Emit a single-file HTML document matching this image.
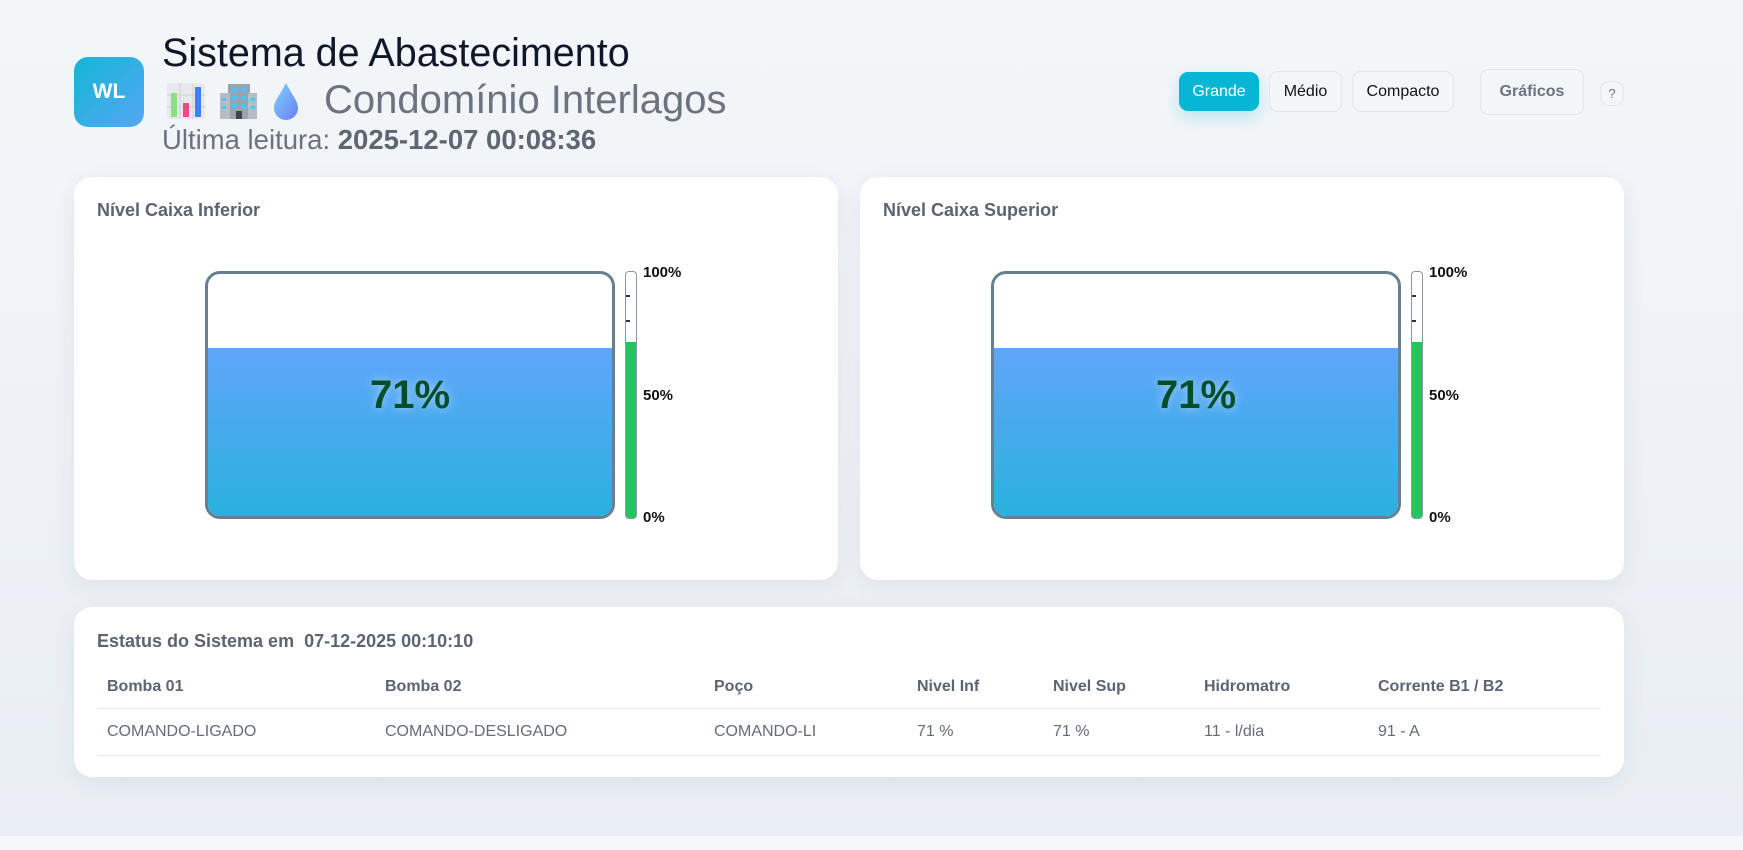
<!DOCTYPE html>
<html><head><meta charset="utf-8"><style>
*{box-sizing:border-box;margin:0;padding:0}
body{width:1743px;height:850px;overflow:hidden;font-family:"Liberation Sans",sans-serif;background:linear-gradient(180deg,#f3f6f9 0%,#e9eef4 100%);position:relative}
.foot{position:absolute;left:0;top:836px;width:1743px;height:14px;background:#f4f7fa}
.abs{position:absolute}
.logo{left:74px;top:57px;width:70px;height:70px;border-radius:14px;background:linear-gradient(135deg,#14b6d6,#55a6f5);color:#fff;font-weight:bold;font-size:21px;display:flex;align-items:center;justify-content:center}
.t1{left:162px;top:31px;font-size:39.5px;color:#0f172a;white-space:nowrap}
.t2{left:166px;top:78px;font-size:40px;color:#6b7280;white-space:nowrap;display:flex;align-items:center;gap:12px}
.t3{left:162px;top:124px;font-size:27.5px;color:#6b7280;white-space:nowrap}
.t3 b{color:#5f6673}
.btn{position:absolute;border:1px solid #e0e5eb;border-radius:9px;background:#f3f6f9;display:flex;align-items:center;justify-content:center;font-size:16px;color:#111}
.card{position:absolute;background:#fff;border-radius:18px;box-shadow:0 6px 24px rgba(30,50,80,.07)}
.ct{position:absolute;left:23px;top:23px;font-size:18px;font-weight:bold;color:#5b6472}
.tank{position:absolute;width:410px;height:248px;border:3.5px solid #66808f;border-radius:15px;overflow:hidden;background:#fff}
.water{position:absolute;left:0;right:0;bottom:0;height:168px;background:linear-gradient(180deg,#60a5fa,#29b1de)}
.pct{position:absolute;left:0;right:0;top:99px;text-align:center;font-size:40px;font-weight:bold;color:#064e2a;text-shadow:0 0 10px rgba(255,255,255,.5)}
.gauge{position:absolute;width:12px;height:248px;border:1.5px solid #8b97a8;border-radius:4px;background:#fff;overflow:hidden}
.gauge .g{position:absolute;left:0;right:0;bottom:0;height:176px;background:#22c55e}
.gauge .k{position:absolute;left:0;width:4px;height:1.5px;background:#333}
.lbl{position:absolute;font-size:15px;font-weight:bold;color:#111}
table{position:absolute;left:97px;top:666px;width:1504px;border-collapse:collapse;font-size:16px}
th{text-align:left;color:#5b6472;font-weight:bold;height:42px;border-bottom:1px solid #e8ecf0;padding-left:10px}
td{color:#646c78;height:47px;border-bottom:1px solid #e8ecf0;padding-left:10px}
</style></head><body>
<div class="foot"></div>
<div class="abs logo">WL</div>
<div class="abs t1">Sistema de Abastecimento</div>
<div class="abs t2">
<svg width="40" height="40" viewBox="0 0 40 40"><rect x="1" y="2" width="38" height="36" rx="3" fill="#e8e8ee"/><path d="M1 14h38M1 26h38M14 2v36M27 2v36" stroke="#cfcfd8"/><rect x="5" y="12" width="6" height="24" fill="#8de07a"/><rect x="17" y="22" width="6" height="14" fill="#ef4a82"/><rect x="29" y="6" width="6" height="30" fill="#3b82f6"/></svg>
<svg width="40" height="40" viewBox="0 0 40 40"><rect x="10" y="3" width="22" height="35" fill="#9aa3b0"/><rect x="2" y="12" width="10" height="26" fill="#b4bcc6"/><rect x="30" y="12" width="9" height="26" fill="#b4bcc6"/><g fill="#4fc3f7"><rect x="14" y="7" width="5" height="4"/><rect x="23" y="7" width="5" height="4"/><rect x="14" y="15" width="5" height="4"/><rect x="23" y="15" width="5" height="4"/><rect x="14" y="23" width="5" height="4"/><rect x="23" y="23" width="5" height="4"/><rect x="4" y="17" width="4" height="3"/><rect x="4" y="25" width="4" height="3"/><rect x="33" y="17" width="4" height="3"/><rect x="33" y="25" width="4" height="3"/></g><rect x="18" y="30" width="6" height="8" fill="#444"/></svg>
<svg width="32" height="40" viewBox="0 0 32 40"><defs><linearGradient id="d" x1="0" y1="0" x2="1" y2="1"><stop offset="0" stop-color="#7dd3fc"/><stop offset="1" stop-color="#6b7ff5"/></linearGradient></defs><path d="M16 2C10 14 4 20 4 27a12 12 0 0 0 24 0c0-7-6-13-12-25z" fill="url(#d)"/></svg>
<span style="margin-left:10px">Condomínio Interlagos</span></div>
<div class="abs t3">Última leitura: <b>2025-12-07 00:08:36</b></div>

<div class="btn" style="left:1179px;top:72px;width:80px;height:39px;background:#06b6d4;border-color:#06b6d4;color:#fff;box-shadow:0 6px 16px rgba(6,182,212,.25)">Grande</div>
<div class="btn" style="left:1269px;top:71px;width:73px;height:41px">Médio</div>
<div class="btn" style="left:1352px;top:71px;width:102px;height:41px">Compacto</div>
<div class="btn" style="left:1480px;top:69px;width:104px;height:46px;color:#6b7280;font-weight:bold">Gráficos</div>
<div class="btn" style="left:1600px;top:81px;width:24px;height:25px;font-size:13px;color:#6b7280;border-color:#dde8ee">?</div>

<div class="card" style="left:74px;top:177px;width:764px;height:403px">
<div class="ct">Nível Caixa Inferior</div>
</div>
<div class="card" style="left:860px;top:177px;width:764px;height:403px">
<div class="ct">Nível Caixa Superior</div>
</div>

<div class="tank" style="left:205px;top:271px"><div class="water"></div><div class="pct">71%</div></div>
<div class="gauge" style="left:625px;top:271px"><div class="g"></div><div class="k" style="top:23px"></div><div class="k" style="top:48px"></div></div>
<div class="lbl" style="left:643px;top:264px">100%</div>
<div class="lbl" style="left:643px;top:387px">50%</div>
<div class="lbl" style="left:643px;top:509px">0%</div>

<div class="tank" style="left:991px;top:271px"><div class="water"></div><div class="pct">71%</div></div>
<div class="gauge" style="left:1411px;top:271px"><div class="g"></div><div class="k" style="top:23px"></div><div class="k" style="top:48px"></div></div>
<div class="lbl" style="left:1429px;top:264px">100%</div>
<div class="lbl" style="left:1429px;top:387px">50%</div>
<div class="lbl" style="left:1429px;top:509px">0%</div>

<div class="card" style="left:74px;top:607px;width:1550px;height:170px">
<div class="ct" style="top:24px">Estatus do Sistema em &nbsp;07-12-2025 00:10:10</div>
</div>
<table>
<colgroup><col style="width:278px"><col style="width:329px"><col style="width:203px"><col style="width:136px"><col style="width:151px"><col style="width:174px"><col></colgroup>
<tr><th>Bomba 01</th><th>Bomba 02</th><th>Poço</th><th>Nivel Inf</th><th>Nivel Sup</th><th>Hidromatro</th><th>Corrente B1 / B2</th></tr>
<tr><td>COMANDO-LIGADO</td><td>COMANDO-DESLIGADO</td><td>COMANDO-LI</td><td>71 %</td><td>71 %</td><td>11 - l/dia</td><td>91 - A</td></tr>
</table>
</body></html>
